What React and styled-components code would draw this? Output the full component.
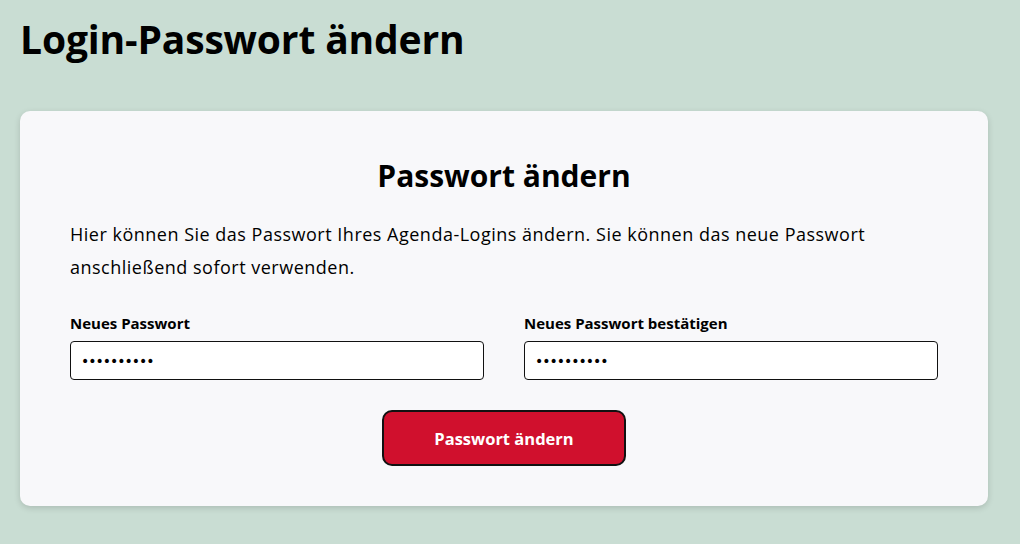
import React from "react";
import styled, { createGlobalStyle } from "styled-components";

const Global = createGlobalStyle`
  html, body { margin: 0; padding: 0; }
  body {
    background: #c9ddd3;
    font-family: "Open Sans", "Noto Sans", sans-serif;
    color: #000;
  }
`;

const Page = styled.main`
  padding: 12px 32px 38px 20px;
  min-height: 544px;
  box-sizing: border-box;
`;

const Title = styled.h1`
  margin: 0 0 45px;
  font-size: 39px;
  line-height: 54px;
  font-weight: 700;
  letter-spacing: -0.15px;
`;

const Card = styled.section`
  background: #f8f8fa;
  border-radius: 10px;
  box-shadow: 0 2px 6px rgba(0, 0, 0, 0.15);
  padding: 45px 50px 40px;
`;

const CardTitle = styled.h2`
  margin: 0 0 22px;
  text-align: center;
  font-size: 30px;
  line-height: 40px;
  font-weight: 700;
  letter-spacing: 0;
`;

const Intro = styled.p`
  margin: 0 0 30px;
  font-size: 18px;
  line-height: 33px;
  letter-spacing: 0.5px;
`;

const Fields = styled.div`
  display: grid;
  grid-template-columns: 1fr 1fr;
  column-gap: 40px;
  margin-bottom: 30px;
`;

const Field = styled.label`
  display: flex;
  flex-direction: column;
  gap: 9px;
`;

const LabelText = styled.span`
  font-size: 15px;
  line-height: 18px;
  font-weight: 700;
`;

const Input = styled.input`
  box-sizing: border-box;
  height: 39px;
  border: 1px solid #111;
  border-radius: 4px;
  background: #fff;
  padding: 0 10px;
  font-size: 14px;
  font-family: "DejaVu Sans", sans-serif;
  letter-spacing: -1px;
  outline: none;
`;

const Actions = styled.div`
  display: flex;
  justify-content: center;
`;

const Button = styled.button`
  box-sizing: border-box;
  width: 244px;
  height: 56px;
  border: 2px solid #111;
  border-radius: 10px;
  background: #d0102d;
  color: #fff;
  font-family: "Open Sans", sans-serif;
  font-size: 16.5px;
  font-weight: 700;
  cursor: pointer;
`;

export default function App() {
  return (
    <>
      <Global />
      <Page>
        <Title>Login-Passwort ändern</Title>
        <Card>
          <CardTitle>Passwort ändern</CardTitle>
          <Intro>
            Hier können Sie das Passwort Ihres Agenda-Logins ändern. Sie können das neue Passwort
            anschließend sofort verwenden.
          </Intro>
          <Fields>
            <Field>
              <LabelText>Neues Passwort</LabelText>
              <Input type="password" defaultValue="0123456789" />
            </Field>
            <Field>
              <LabelText>Neues Passwort bestätigen</LabelText>
              <Input type="password" defaultValue="0123456789" />
            </Field>
          </Fields>
          <Actions>
            <Button type="button">Passwort ändern</Button>
          </Actions>
        </Card>
      </Page>
    </>
  );
}
